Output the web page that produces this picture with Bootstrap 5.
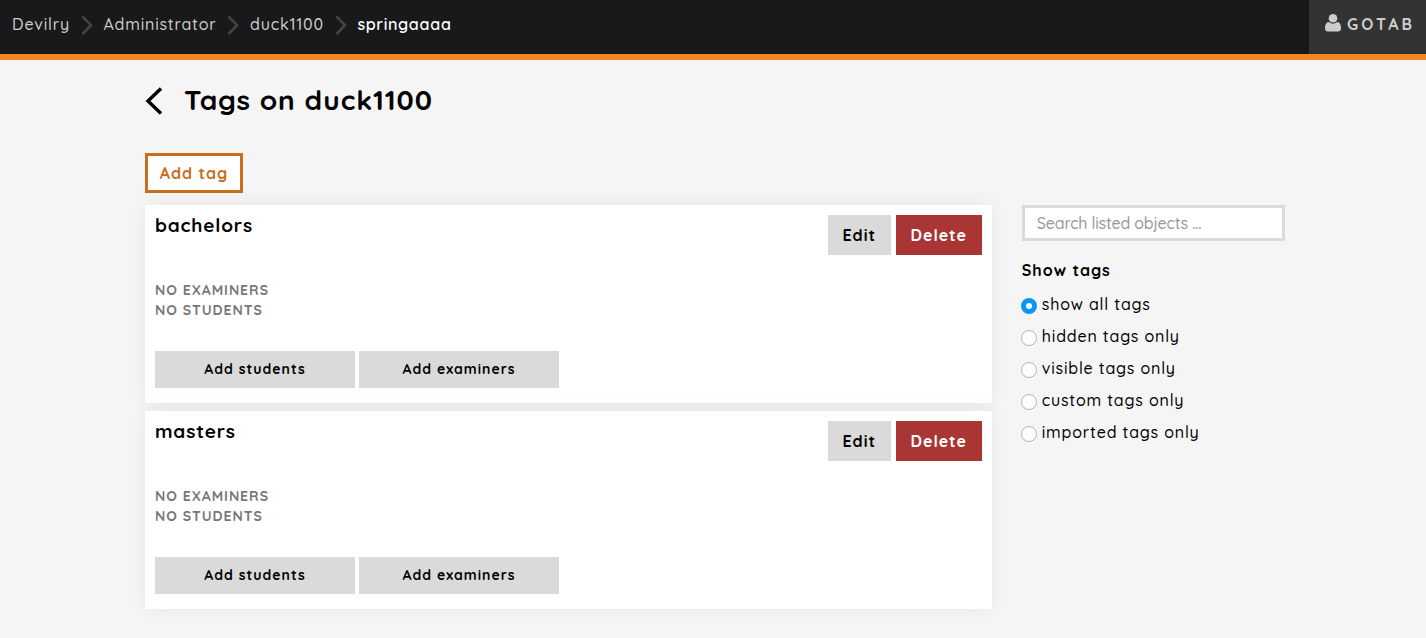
<!DOCTYPE html>
<html lang="en">
<head>
<meta charset="utf-8">
<meta name="viewport" content="width=device-width, initial-scale=1">
<title>Tags on duck1100</title>
<link href="https://cdn.jsdelivr.net/npm/bootstrap@5.3.0/dist/css/bootstrap.min.css" rel="stylesheet">
<style>
body{font-family:Quicksand,Lato,"Liberation Sans",sans-serif;font-size:16px;font-weight:500;line-height:20px;letter-spacing:1px;color:#000;background:#f5f5f5;min-height:638px;overflow:hidden}
a{color:inherit;text-decoration:none}
.topbar{height:60px;background:#191919;border-bottom:6px solid #f18826;color:#ccc}
.crumbs{height:49px;padding-left:12px;letter-spacing:.8px}
.crumbs a,.crumbs .current{padding-bottom:2px}
.crumbs svg{width:33.500px;height:20px;flex:none;fill:none;stroke:#444;stroke-width:2.600}
.current{font-weight:600;letter-spacing:.65px}
.user-menu{width:117px;background:#333;font-weight:700;letter-spacing:3px;padding:14px 0 0 16px;gap:6px}
.page{width:1174px;padding-left:4px;margin:0 auto}
.page .row{--bs-gutter-x:30px;width:1169px;margin:12px 0 0}
.page-title{font-size:28px;line-height:30px;font-weight:700;margin:0;letter-spacing:.9px}
.title-row{padding:25px 15px 0;gap:21px;height:93px}
.btn{--bs-btn-border-radius:0;--bs-btn-border-width:0;--bs-btn-font-weight:700;--bs-btn-line-height:20px;--bs-btn-color:#000;letter-spacing:inherit;padding:0}
.btn-add{--bs-btn-color:#c86f1e;border:3px solid #c86f1e;background:#fff;width:98px;height:40px;margin-left:15px}
.btn-grey{background:#dadada}
.btn-edit{width:63px;height:40px}
.btn-del{width:86px;height:40px;background:#a93535;--bs-btn-color:#fff}
.btn-wide{width:200px;height:37px;font-size:14px;padding-bottom:2px}
.btn-pair{gap:5px}
.tag-card{height:198px;background:#fff;box-shadow:0 0 20px rgba(0,0,0,.06);padding:10px;margin-bottom:8px}
.tag-name{font-size:19px;line-height:20px;font-weight:700;margin:0;letter-spacing:.85px}
.tag-info{font-size:14px;line-height:20px;font-weight:700;color:#777;margin:25px 0 31px;letter-spacing:.95px}
.search{width:263px;height:36px;border:3px solid #dadada;border-radius:0;padding:0 12px;letter-spacing:-.2px;font-size:16px;font-weight:500}
.search::placeholder{color:#999}
.filter-title{font-size:16px;line-height:20px;font-weight:700;margin:19px 0 14px}
.opt{height:20px;margin-bottom:12px;gap:5px;margin-left:-1px;letter-spacing:.83px}
.opt input{appearance:none;width:16px;height:16px;border-radius:50%;border:1px solid #b4b4b4;background:#fff;margin:4px 0 0;flex:none}
.opt input:checked{border:5px solid #0a96f8}
</style>
</head>
<body>
<header class="topbar d-flex justify-content-between">
  <nav class="crumbs d-flex align-items-center">
    <a href="#">Devilry</a>
    <svg viewBox="0 0 33.500 20"><path d="M12.500 1.500 21 10.200 12.500 19"/></svg>
    <a href="#">Administrator</a>
    <svg viewBox="0 0 33.500 20"><path d="M12.500 1.500 21 10.200 12.500 19"/></svg>
    <a href="#">duck1100</a>
    <svg viewBox="0 0 33.500 20"><path d="M12.500 1.500 21 10.200 12.500 19"/></svg>
    <span class="current text-white">springaaaa</span>
  </nav>
  <a href="#" class="user-menu d-flex align-items-start">
    <svg width="16" height="18" viewBox="0 0 16 18" fill="#ccc"><circle cx="8" cy="4.300" r="4.300"/><path d="M4 8Q8 11.500 12 8C14.800 8.300 16 10.500 16 14Q16 17.500 13 17.500H3Q0 17.500 0 14C0 10.500 1.200 8.300 4 8Z"/></svg>
    <span>GOTAB</span>
  </a>
</header>
<main class="page">
  <div class="title-row d-flex align-items-start">
    <a href="#"><svg width="18" height="30" viewBox="0 0 18 30"><path d="M16 3.500 3 16 16 28.500" fill="none" stroke="#000" stroke-width="3.400"/></svg></a>
    <h1 class="page-title">Tags on duck1100</h1>
  </div>
  <button class="btn btn-add">Add tag</button>
  <div class="row">
    <div class="col-9">
      <section class="tag-card">
        <div class="d-flex justify-content-between">
          <h2 class="tag-name">bachelors</h2>
          <div class="btn-pair d-flex"><button class="btn btn-grey btn-edit">Edit</button><button class="btn btn-del">Delete</button></div>
        </div>
        <div class="tag-info">NO EXAMINERS<br>NO STUDENTS</div>
        <div class="d-flex gap-1"><button class="btn btn-grey btn-wide">Add students</button><button class="btn btn-grey btn-wide">Add examiners</button></div>
      </section>
      <section class="tag-card">
        <div class="d-flex justify-content-between">
          <h2 class="tag-name">masters</h2>
          <div class="btn-pair d-flex"><button class="btn btn-grey btn-edit">Edit</button><button class="btn btn-del">Delete</button></div>
        </div>
        <div class="tag-info">NO EXAMINERS<br>NO STUDENTS</div>
        <div class="d-flex gap-1"><button class="btn btn-grey btn-wide">Add students</button><button class="btn btn-grey btn-wide">Add examiners</button></div>
      </section>
    </div>
    <aside class="col-3">
      <input class="search form-control" placeholder="Search listed objects ...">
      <h3 class="filter-title">Show tags</h3>
      <label class="opt d-flex"><input type="radio" name="filter" checked><span>show all tags</span></label>
      <label class="opt d-flex"><input type="radio" name="filter"><span>hidden tags only</span></label>
      <label class="opt d-flex"><input type="radio" name="filter"><span>visible tags only</span></label>
      <label class="opt d-flex"><input type="radio" name="filter"><span>custom tags only</span></label>
      <label class="opt d-flex"><input type="radio" name="filter"><span>imported tags only</span></label>
    </aside>
  </div>
</main>
<script src="https://cdn.jsdelivr.net/npm/bootstrap@5.3.0/dist/js/bootstrap.bundle.min.js"></script>
</body>
</html>
